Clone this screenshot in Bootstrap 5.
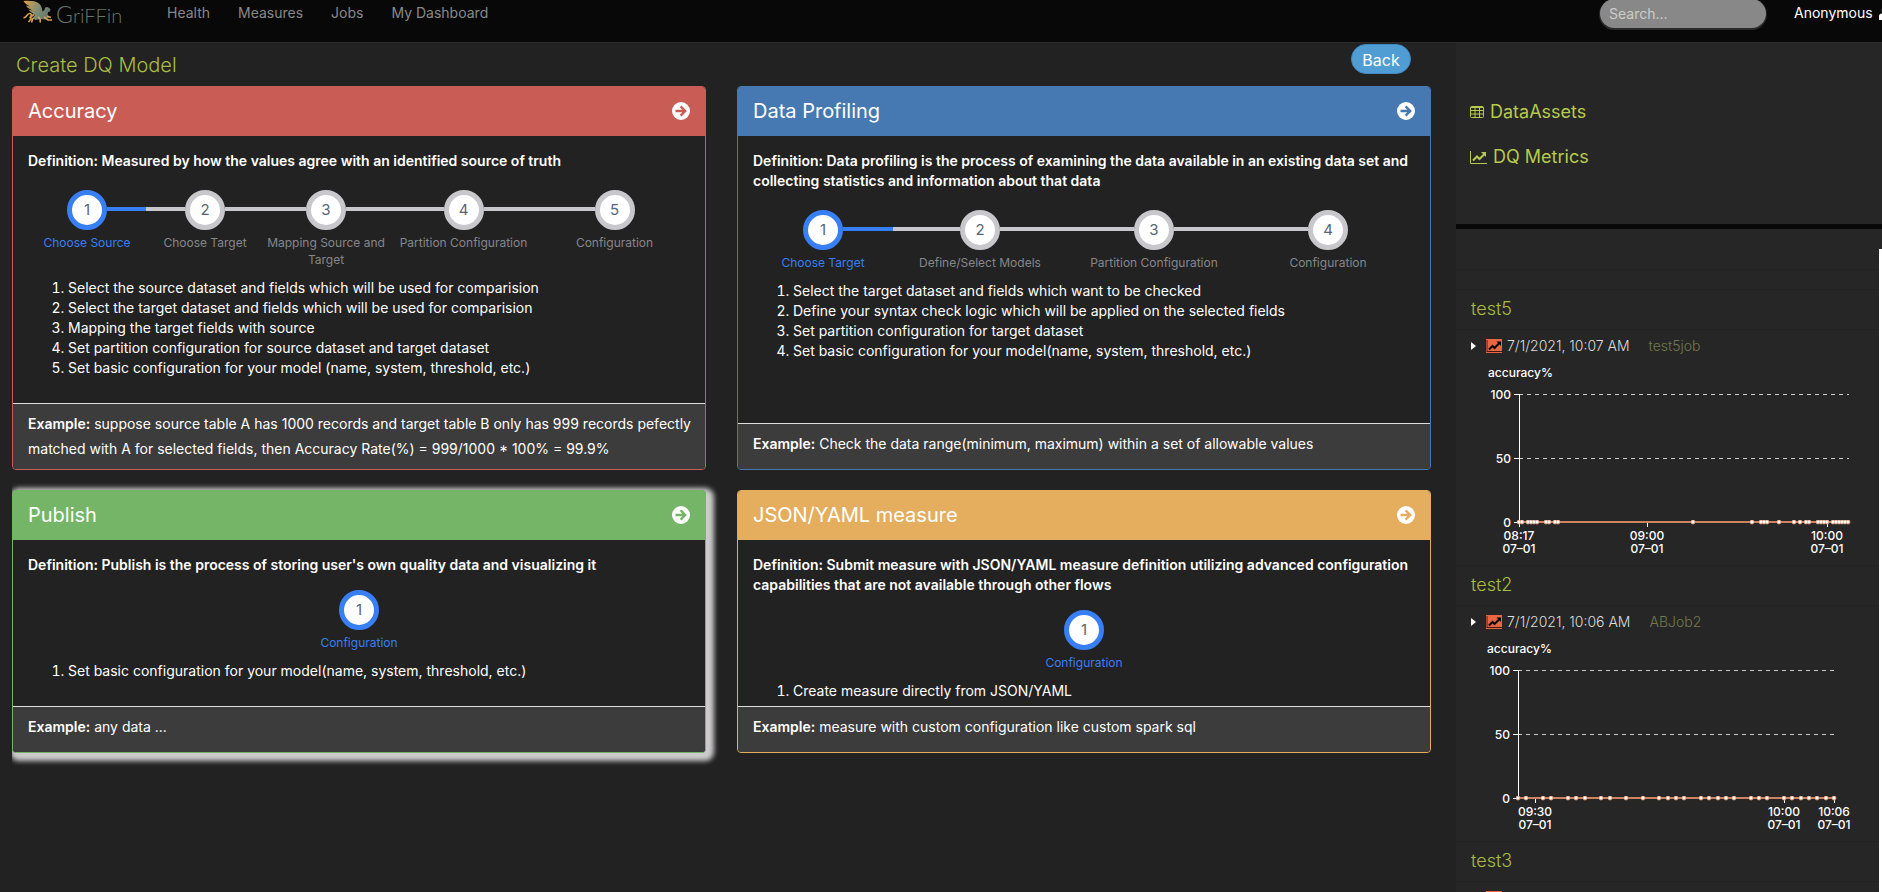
<!DOCTYPE html>
<html lang="en">
<head>
<meta charset="utf-8">
<meta name="viewport" content="width=device-width, initial-scale=1">
<title>Griffin - Create DQ Model</title>
<link href="https://cdn.jsdelivr.net/npm/bootstrap@5.3.0/dist/css/bootstrap.min.css" rel="stylesheet">
<style>
  body { background: #222; color: #fff; font-family: Inter, "Liberation Sans", sans-serif; font-size: 14px; line-height: 20px; }
  a { text-decoration: none; }
  .topbar { height: 43px; background: #080808; border-bottom: 1px solid #2b2b2b; }
  .topbar-inner { height: 26px; }
  .brand { margin-left: 22px; width: 145px; }
  .brand-text { font-family: Lato, sans-serif; font-weight: 300; font-size: 20px; fill: #66786e; }
  .topnav { gap: 28px; }
  .topnav a { color: #888; }
  .search-box { width: 166px; height: 29px; margin: 1px 28px 0 0; padding: 0 9px; border: 0; border-radius: 15px; background: #888; color: #fff; box-shadow: 0 1px 0 1px #2b2b2b; }
  .search-box::placeholder { color: #ccc; }
  .user-box { width: 88px; gap: 6px; }
  .main-pane { padding: 0 25px 0 12px; min-width: 0; }
  .page-title { color: #a8bd42; font-size: 20px; font-weight: 300; line-height: 41px; padding: 2px 0 0 4px; margin: 0; }
  .back-btn { width: 60px; height: 30px; margin: 1px 20px 0 0; border: 1px solid #3f8ac4; border-radius: 15px; background: #4f9dd3; color: #fff; font-size: 16px; line-height: 30px; }
  .models { display: grid; grid-template-columns: 1fr 1fr; gap: 20px 31px; }
  .model { --tone: #c95c54; border: 1px solid var(--tone); border-radius: 4px; background: #222; color: #fff; overflow: hidden; }
  .tone-blue { --tone: #4679b2; }
  .tone-green { --tone: #75b567; overflow: visible; box-shadow: 3px 3px 5px 5px #ccc; clip-path: inset(-20px -20px -20px 0); }
  .tone-gold { --tone: #e5ae5f; }
  .model-head { height: 49px; padding: 0 15px 2px; background: var(--tone); font-size: 20px; }
  .model-head h2 { font-size: 20px; line-height: 24px; margin: 0; font-weight: 400; }
  .model-body { padding: 15px 15px 5px; }
  .body-tall { min-height: 267px; }
  .body-short { min-height: 166px; }
  .definition { font-size: 14px; line-height: 20px; font-weight: 600; margin: 0 0 15px; }
  .steps { display: grid; margin: 0; padding: 0; list-style: none; }
  .steps-5 { grid-template-columns: 118fr 118fr 124fr 151fr 151fr; margin-top: 19px; }
  .steps-4 { grid-template-columns: 140fr 174fr 174fr 174fr; margin-top: 19px; }
  .rail { flex: 1; height: 4px; background: #c7c7cc; margin-bottom: 2px; }
  .step-dot { width: 40px; height: 40px; border: 5px solid #c7c7cc; border-radius: 50%; background: #fff; color: #576476; font-size: 15px; }
  .step-name { color: #86868b; font-size: 12px; line-height: 17px; margin-top: 4px; text-align: center; }
  .steps > li:first-child .rail:first-child, .steps > li:last-child .rail:last-child { background: transparent; }
  .current .step-dot { border-color: #387ef5; }
  .current .rail { background: #387ef5; }
  .current .step-name { color: #387ef5; }
  .todo { margin: 10px 0 0; padding-left: 40px; }
  .model-foot { min-height: 46px; padding: 7px 4px 8px 15px; border-top: 1px solid #ddd; border-radius: 0 0 3px 3px; background: #3c3c3c; line-height: 25px; }
  .side-pane { width: 426px; background: #262626; }
  .side-links { height: 181px; padding: 57px 14px 0; }
  .side-links a { color: #b6cb4c; font-size: 18px; line-height: 24px; gap: 6px; margin-bottom: 21px; }
  .side-bar { height: 5px; background: #080808; }
  .metrics { margin-top: 20px; padding: 20px 0 0; border-right: 3px solid #fff; }
  .metrics > div { border-top: 1px solid #232323; padding: 0 15px; }
  .metric-gap { height: 20px; }
  .metric-name { height: 40px; }
  .metric-name h3 { color: #a8bd42; font-size: 18px; font-weight: 300; line-height: 38px; margin: 0; }
  .metric-chart { height: 236px; }
  .run-row { height: 31px; font-weight: 300; color: #ddd; }
  .run-row a { color: #74784f; margin-left: 19px; }
  .run-icon { margin: 0 5px 0 10px; }
  .plot text { font-size: 12px; font-weight: 500; fill: #fff; }
  .axis { stroke: #fff; fill: none; }
  .grid-dash { stroke: #ccc; stroke-dasharray: 4 4; fill: none; }
  .series { stroke: #d0835f; stroke-width: 2; fill: none; }
</style>
</head>
<body class="d-flex flex-column vh-100 overflow-hidden">
<svg width="0" height="0" class="position-absolute" aria-hidden="true">
  <defs>
    <symbol id="go" viewBox="0 0 18 18"><circle cx="9" cy="9" r="9" fill="#fff"/><path d="M3.500 9H13M8.600 4.400 13.200 9l-4.600 4.600" fill="none" stroke="var(--tone)" stroke-width="2.400"/></symbol>
    <symbol id="trend" viewBox="0 0 16 14"><path fill="#ea6642" d="M0 0h16v14H0z"/><path fill="#9c432c" d="M0 1h2v12H0z"/><path d="M1 12h15v1H1z" fill="#3a1a12"/><path d="M3 10.500 6.500 7l2 2L13 4.500" fill="none" stroke="#000" stroke-width="2"/><path d="M10.500 2.500H15V7z"/></symbol>
    <marker id="dot" viewBox="0 0 6 6" refX="3" refY="3" markerWidth="5" markerHeight="5" markerUnits="userSpaceOnUse"><circle cx="3" cy="3" r="2.500" fill="#fff" stroke="#d0835f"/></marker>
  </defs>
</svg>

<nav class="topbar flex-shrink-0">
  <div class="topbar-inner d-flex align-items-center">
    <a class="brand" href="#" aria-label="Griffin">
      <svg width="110" height="26" viewBox="0 0 110 26" class="d-block">
        <defs><linearGradient id="wing" x1="0" x2="1" y1=".1" y2=".5"><stop offset="0" stop-color="#d9a04c"/><stop offset=".6" stop-color="#7f8d75"/><stop offset="1" stop-color="#66786e"/></linearGradient></defs>
        <path fill="url(#wing)" d="M1.500 1C8 .5 14 1 17 3.500 20 6 20 9 20.500 11.500l2-1.500.500-2.500 2.500-.5 3 2-.500 2.500-2 .500-.500 3.500 2 2-4 2-5-.500-5 1-3-2 2.500-3C9.500 12.500 7.500 11 6.500 9.500l4 1C7.500 9 5 7.500 4 5.500L8 6.500C5 5 2.500 3 1.500 1z"/>
        <path fill="none" stroke="#d9a04c" stroke-width="1.600" d="M1.500 17.500c3 1 3-4 6-4 3 0 2 3 0 4.500M12 14.500c-3 2-4 3-3 4.500l-2.500 3M16 17c2 1 3 2 2 5.500M11 18l-1.500 4.500M22 17l4 3h4M25 16l4 1.500"/>
        <text class="brand-text" x="34" y="23"><tspan font-size="23">G</tspan>riFFin</text>
      </svg>
    </a>
    <div class="topnav d-flex">
      <a href="#">Health</a><a href="#">Measures</a><a href="#">Jobs</a><a href="#">My Dashboard</a>
    </div>
    <input class="search-box ms-auto" type="search" placeholder="Search..." aria-label="Search">
    <div class="user-box d-flex align-items-center overflow-hidden">
      <span>Anonymous</span>
      <svg width="12" height="13" viewBox="0 0 12 13" class="flex-shrink-0"><circle cx="6" cy="3.500" r="3.200" fill="#fff"/><path d="M0 13V9.500Q0 6.500 3 6.500h6q3 0 3 3V13z" fill="#fff"/></svg>
    </div>
  </div>
</nav>

<div class="d-flex flex-grow-1 overflow-hidden">
  <main class="main-pane flex-grow-1">
    <div class="d-flex justify-content-between align-items-start">
      <h1 class="page-title">Create DQ Model</h1>
      <button type="button" class="back-btn p-0">Back</button>
    </div>

    <div class="models">
      <section class="model d-flex flex-column">
        <div class="model-head d-flex align-items-center justify-content-between"><h2>Accuracy</h2><a href="#" aria-label="Open Accuracy" class="d-flex"><svg width="18" height="18"><use href="#go"/></svg></a></div>
        <div class="model-body body-tall flex-grow-1">
          <p class="definition">Definition: Measured by how the values agree with an identified source of truth</p>
          <ul class="steps steps-5">
            <li class="current"><div class="d-flex align-items-center"><i class="rail"></i><span class="step-dot d-flex align-items-center justify-content-center">1</span><i class="rail"></i></div><div class="step-name">Choose Source</div></li>
            <li><div class="d-flex align-items-center"><i class="rail"></i><span class="step-dot d-flex align-items-center justify-content-center">2</span><i class="rail"></i></div><div class="step-name">Choose Target</div></li>
            <li><div class="d-flex align-items-center"><i class="rail"></i><span class="step-dot d-flex align-items-center justify-content-center">3</span><i class="rail"></i></div><div class="step-name">Mapping Source and Target</div></li>
            <li><div class="d-flex align-items-center"><i class="rail"></i><span class="step-dot d-flex align-items-center justify-content-center">4</span><i class="rail"></i></div><div class="step-name">Partition Configuration</div></li>
            <li><div class="d-flex align-items-center"><i class="rail"></i><span class="step-dot d-flex align-items-center justify-content-center">5</span><i class="rail"></i></div><div class="step-name">Configuration</div></li>
          </ul>
          <ol class="todo">
            <li>Select the source dataset and fields which will be used for comparision</li>
            <li>Select the target dataset and fields which will be used for comparision</li>
            <li>Mapping the target fields with source</li>
            <li>Set partition configuration for source dataset and target dataset</li>
            <li>Set basic configuration for your model (name, system, threshold, etc.)</li>
          </ol>
        </div>
        <div class="model-foot"><b class="fw-semibold">Example:</b> suppose source table A has 1000 records and target table B only has 999 records pefectly matched with A for selected fields, then Accuracy Rate(%) = 999/1000 * 100% = 99.9%</div>
      </section>

      <section class="model tone-blue d-flex flex-column">
        <div class="model-head d-flex align-items-center justify-content-between"><h2>Data Profiling</h2><a href="#" aria-label="Open Data Profiling" class="d-flex"><svg width="18" height="18"><use href="#go"/></svg></a></div>
        <div class="model-body body-tall flex-grow-1">
          <p class="definition">Definition: Data profiling is the process of examining the data available in an existing data set and collecting statistics and information about that data</p>
          <ul class="steps steps-4">
            <li class="current"><div class="d-flex align-items-center"><i class="rail"></i><span class="step-dot d-flex align-items-center justify-content-center">1</span><i class="rail"></i></div><div class="step-name">Choose Target</div></li>
            <li><div class="d-flex align-items-center"><i class="rail"></i><span class="step-dot d-flex align-items-center justify-content-center">2</span><i class="rail"></i></div><div class="step-name">Define/Select Models</div></li>
            <li><div class="d-flex align-items-center"><i class="rail"></i><span class="step-dot d-flex align-items-center justify-content-center">3</span><i class="rail"></i></div><div class="step-name">Partition Configuration</div></li>
            <li><div class="d-flex align-items-center"><i class="rail"></i><span class="step-dot d-flex align-items-center justify-content-center">4</span><i class="rail"></i></div><div class="step-name">Configuration</div></li>
          </ul>
          <ol class="todo">
            <li>Select the target dataset and fields which want to be checked</li>
            <li>Define your syntax check logic which will be applied on the selected fields</li>
            <li>Set partition configuration for target dataset</li>
            <li>Set basic configuration for your model(name, system, threshold, etc.)</li>
          </ol>
        </div>
        <div class="model-foot"><b class="fw-semibold">Example:</b> Check the data range(minimum, maximum) within a set of allowable values</div>
      </section>

      <section class="model tone-green d-flex flex-column">
        <div class="model-head d-flex align-items-center justify-content-between"><h2>Publish</h2><a href="#" aria-label="Open Publish" class="d-flex"><svg width="18" height="18"><use href="#go"/></svg></a></div>
        <div class="model-body body-short flex-grow-1">
          <p class="definition">Definition: Publish is the process of storing user's own quality data and visualizing it</p>
          <ul class="steps">
            <li class="current"><div class="d-flex justify-content-center"><span class="step-dot d-flex align-items-center justify-content-center">1</span></div><div class="step-name">Configuration</div></li>
          </ul>
          <ol class="todo"><li>Set basic configuration for your model(name, system, threshold, etc.)</li></ol>
        </div>
        <div class="model-foot"><b class="fw-semibold">Example:</b> any data ...</div>
      </section>

      <section class="model tone-gold d-flex flex-column">
        <div class="model-head d-flex align-items-center justify-content-between"><h2>JSON/YAML measure</h2><a href="#" aria-label="Open JSON/YAML measure" class="d-flex"><svg width="18" height="18"><use href="#go"/></svg></a></div>
        <div class="model-body body-short flex-grow-1">
          <p class="definition">Definition: Submit measure with JSON/YAML measure definition utilizing advanced configuration capabilities that are not available through other flows</p>
          <ul class="steps">
            <li class="current"><div class="d-flex justify-content-center"><span class="step-dot d-flex align-items-center justify-content-center">1</span></div><div class="step-name">Configuration</div></li>
          </ul>
          <ol class="todo"><li>Create measure directly from JSON/YAML</li></ol>
        </div>
        <div class="model-foot"><b class="fw-semibold">Example:</b> measure with custom configuration like custom spark sql</div>
      </section>
    </div>
  </main>

  <aside class="side-pane flex-shrink-0 d-flex flex-column">
    <div class="side-links flex-shrink-0">
      <a href="#" class="d-flex align-items-center"><svg width="14" height="12" viewBox="0 0 14 12" fill="none" stroke="currentColor"><rect x=".5" y=".5" width="13" height="11" rx="1"/><path d="M1 1.500h12M1 4.500h12M1 8h12M5 2v9M9.500 2v9"/></svg><span>DataAssets</span></a>
      <a href="#" class="d-flex align-items-center"><svg width="17" height="13" viewBox="0 0 17 13" fill="none" stroke="currentColor"><path d="M.5 0v12.500H17"/><path d="M3 9.500 7 5.500l2.500 2.500 5-5" stroke-width="2"/><path d="M11 1h5v5z" fill="currentColor" stroke="none"/></svg><span>DQ Metrics</span></a>
    </div>
    <div class="side-bar flex-shrink-0"></div>
    <div class="metrics flex-grow-1 overflow-hidden">
      <div class="metric-gap"></div>
      <div class="metric-name"><h3>test5</h3></div>
      <div class="metric-chart">
        <div class="run-row d-flex align-items-center"><svg width="5" height="8"><path d="M0 0 5 4 0 8z" fill="#fff"/></svg><svg class="run-icon" width="16" height="14"><use href="#trend"/></svg><span>7/1/2021, 10:07 AM</span><a href="#">test5job</a></div>
        <svg class="plot d-block" width="395" height="200">
          <text x="17" y="16">accuracy%</text>
          <path class="grid-dash" d="M48 33.500H378M48 97.500H378"/>
          <path class="axis" d="M48.500 33V162M43 33.500h5M43 97.500h5M43 161.500h5M48.500 162v4M176.500 162v4M356.500 162v4"/>
          <polyline class="series" marker-start="url(#dot)" marker-mid="url(#dot)" marker-end="url(#dot)" points="48,161 51,161 57,161 60,161 63,161 66,161 75,161 78,161 84,161 87,161 222,161 281,161 290,161 293,161 296,161 308,161 323,161 329,161 335,161 338,161 347,161 350,161 353,161 356,161 362,161 365,161 368,161 371,161 374,161 377,161"/>
          <g text-anchor="end"><text x="40" y="38">100</text><text x="40" y="102">50</text><text x="40" y="166">0</text></g>
          <g text-anchor="middle"><text x="48" y="179">08:17</text><text x="48" y="192">07–01</text><text x="176" y="179">09:00</text><text x="176" y="192">07–01</text><text x="356" y="179">10:00</text><text x="356" y="192">07–01</text></g>
        </svg>
      </div>
      <div class="metric-name"><h3>test2</h3></div>
      <div class="metric-chart">
        <div class="run-row d-flex align-items-center"><svg width="5" height="8"><path d="M0 0 5 4 0 8z" fill="#fff"/></svg><svg class="run-icon" width="16" height="14"><use href="#trend"/></svg><span>7/1/2021, 10:06 AM</span><a href="#">ABJob2</a></div>
        <svg class="plot d-block" width="395" height="200">
          <text x="16" y="16">accuracy%</text>
          <path class="grid-dash" d="M47 33.500H363M47 97.500H363"/>
          <path class="axis" d="M47.500 33V162M42 33.500h5M42 97.500h5M42 161.500h5M64.500 162v4M313.500 162v4M363.500 162v4"/>
          <polyline class="series" marker-start="url(#dot)" marker-mid="url(#dot)" marker-end="url(#dot)" points="47,161 55,161 72,161 80,161 97,161 105,161 114,161 130,161 139,161 155,161 172,161 188,161 197,161 205,161 213,161 230,161 238,161 247,161 255,161 263,161 280,161 288,161 296,161 313,161 321,161 330,161 338,161 346,161 355,161 363,161"/>
          <g text-anchor="end"><text x="39" y="38">100</text><text x="39" y="102">50</text><text x="39" y="166">0</text></g>
          <g text-anchor="middle"><text x="64" y="179">09:30</text><text x="64" y="192">07–01</text><text x="313" y="179">10:00</text><text x="313" y="192">07–01</text><text x="363" y="179">10:06</text><text x="363" y="192">07–01</text></g>
        </svg>
      </div>
      <div class="metric-name"><h3>test3</h3></div>
      <div class="metric-chart">
        <div class="run-row d-flex align-items-center"><svg width="5" height="8"><path d="M0 0 5 4 0 8z" fill="#fff"/></svg><svg class="run-icon" width="16" height="14"><use href="#trend"/></svg><span>7/1/2021, 10:05 AM</span></div>
      </div>
    </div>
  </aside>
</div>
<script src="https://cdn.jsdelivr.net/npm/bootstrap@5.3.0/dist/js/bootstrap.bundle.min.js"></script>
</body>
</html>
